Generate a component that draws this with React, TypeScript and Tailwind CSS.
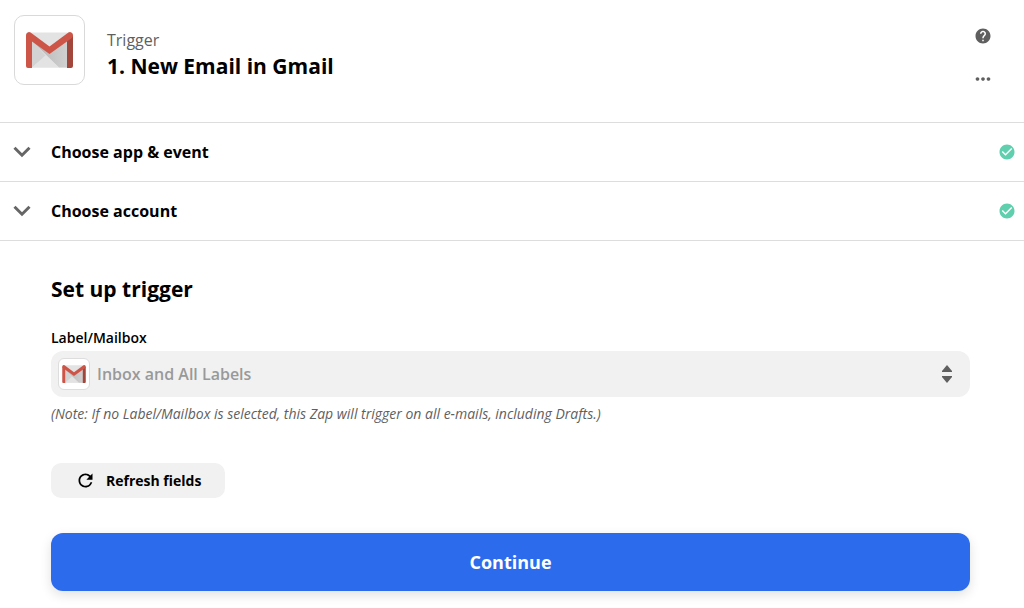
import { useId } from "react";
import { MdCheckCircle, MdHelp, MdMoreHoriz, MdRefresh } from "react-icons/md";

function GmailLogo({ className }: { className: string }) {
  const id = useId();
  return (
    <svg viewBox="0 0 47 36" className={className} aria-hidden="true">
      <defs>
        <linearGradient id={id} x1="0" y1="0" x2="1" y2="0">
          <stop offset="0" stopColor="#b5b5b5" />
          <stop offset="1" stopColor="#d0d0d0" />
        </linearGradient>
      </defs>
      <rect x="2" y="0.5" width="43" height="35" rx="1.5" fill="#e3e3e3" />
      <path d="M6 9 L19.5 23.5 L6 35.5 Z" fill="#d3d3d3" />
      <path d="M6 9 L23.5 21 L41 9 V35.5 H33 Z" fill={`url(#${id})`} />
      <path d="M6 35.5 L20 23.5 L33 35.5 Z" fill="#e3e3e3" />
      <path d="M41 8 L47 3 V34 a2 2 0 0 1 -2 2 H41 Z" fill="#a2453b" />
      <path d="M0 3 L6 8 V36 H2 a2 2 0 0 1 -2 -2 Z" fill="#cd5547" />
      <path
        d="M0 3 A3 3 0 0 1 4.6 0.6 L23.5 14.5 L42.4 0.6 A3 3 0 0 1 47 3 C47 4.6 46.4 5.6 45.2 6.5 L23.5 22 L1.8 6.5 C0.6 5.6 0 4.6 0 3 Z"
        fill="#cd5547"
      />
    </svg>
  );
}

function StepRow({ title }: { title: string }) {
  return (
    <button
      type="button"
      className="flex w-full items-center border-b border-[#dddddd] py-4 pr-2 pl-[13px] text-left"
    >
      <svg viewBox="0 0 18 12" className="h-3 w-[18px] shrink-0" aria-hidden="true">
        <path d="M1.5 1.8 L9 9.2 L16.5 1.8" fill="none" stroke="#666666" strokeWidth="3" />
      </svg>
      <span className="ml-5 flex-1 text-base leading-[26px] font-bold">{title}</span>
      <MdCheckCircle className="size-[18px] text-[#5fcfae]" aria-label="Complete" />
    </button>
  );
}

export default function App() {
  return (
    <main className="bg-white font-['Open_Sans',sans-serif] text-black">
      <header className="flex items-start border-b border-[#dddddd] pt-[15px] pr-8 pb-8 pl-[14px]">
        <div className="flex h-[70px] w-[71px] shrink-0 items-center justify-center rounded-[10px] border border-[#d9d9d9]">
          <GmailLogo className="h-9 w-[47px]" />
        </div>
        <div className="ml-[22px] flex-1 pt-3">
          <p className="text-base leading-[26px] text-[#5f5f5f]">Trigger</p>
          <h1 className="text-[21px] leading-[26px] font-bold">1. New Email in Gmail</h1>
        </div>
        <div className="flex flex-col gap-[23px] pt-3 text-[#5f5f5f]">
          <button type="button" aria-label="Help">
            <MdHelp className="size-[18px]" />
          </button>
          <button type="button" aria-label="More options">
            <MdMoreHoriz className="-mx-0.5 size-[22px]" />
          </button>
        </div>
      </header>

      <StepRow title="Choose app & event" />
      <StepRow title="Choose account" />

      <section className="flex flex-col items-start pt-[31px] pr-[54px] pb-4 pl-[51px]">
        <h2 className="text-[21px] leading-[34px] font-bold">Set up trigger</h2>
        <label htmlFor="mailbox" className="mt-[19px] text-sm leading-[26px] font-semibold">
          Label/Mailbox
        </label>
        <div className="grid w-full items-center">
          <select
            id="mailbox"
            className="col-start-1 row-start-1 h-[46px] w-full appearance-none rounded-xl bg-[#f1f1f1] pr-12 pl-[46px] text-base font-semibold text-[#999999]"
          >
            <option>Inbox and All Labels</option>
          </select>
          <span className="pointer-events-none col-start-1 row-start-1 ml-[7px] flex size-8 items-center justify-center rounded-md border border-[#dddddd] bg-white">
            <GmailLogo className="h-[18px] w-6" />
          </span>
          <svg
            viewBox="0 0 10 18"
            className="pointer-events-none col-start-1 row-start-1 mr-[18px] h-[18px] w-[10px] justify-self-end"
            fill="#5f5f5f"
            aria-hidden="true"
          >
            <path d="M5 0 L10 6 V7 H0 V6 Z" />
            <path d="M5 18 L10 12 V11 H0 V12 Z" />
          </svg>
        </div>
        <p className="mt-1.5 text-sm leading-[22px] text-[#5f5f5f] italic">
          (Note: If no Label/Mailbox is selected, this Zap will trigger on all e-mails, including Drafts.)
        </p>
        <button
          type="button"
          className="mt-[38px] flex h-[35px] items-center gap-[10px] rounded-[10px] bg-[#f1f1f1] px-6 text-sm font-bold"
        >
          <MdRefresh className="size-[21px]" />
          Refresh fields
        </button>
        <button
          type="button"
          className="mt-[35px] h-[58px] w-full rounded-xl bg-[#2b6bec] text-lg font-bold text-white shadow-[0_4px_12px_rgba(0,0,0,0.12)]"
        >
          Continue
        </button>
      </section>
    </main>
  );
}
